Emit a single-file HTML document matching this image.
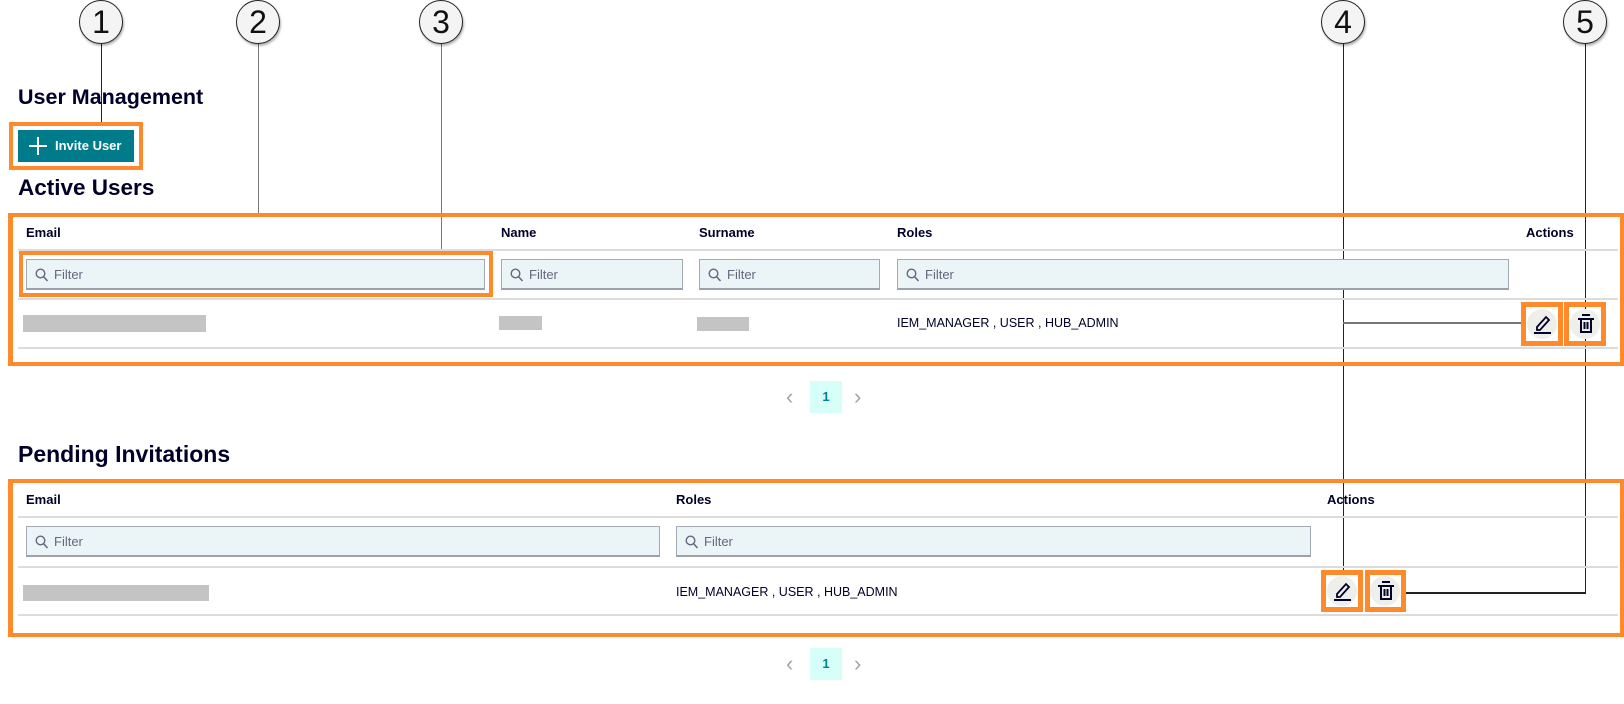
<!DOCTYPE html>
<html><head><meta charset="utf-8"><style>
*{margin:0;padding:0;box-sizing:border-box}
body{width:1624px;height:704px;background:#fff;position:relative;overflow:hidden;font-family:"Liberation Sans",sans-serif;color:#000028}
.a{position:absolute}
.ob{position:absolute;border:4px solid #ff8a2b}
.h{position:absolute;font-size:13px;font-weight:bold;color:#000028}
.ln{position:absolute;background:#dcdcdc;height:2px}
.f{position:absolute;background:#ebf5f7;border:1px solid #a3aab4;border-bottom:2px solid #9ba2ad;height:31px;font-size:13px;color:#66667e;padding-left:27px;line-height:29px}
.f svg{position:absolute;left:8px;top:8px}
.g{position:absolute;background:#c4c4c4}
.c{position:absolute;width:44px;height:44px;border:1.5px solid #222;border-radius:50%;background:#f4f4f4;font-size:32px;text-align:center;line-height:42px;color:#111;box-shadow:1px 2px 2px rgba(0,0,0,.3)}
.vl{position:absolute;width:1.2px;background:#222}
.bt{position:absolute;width:30px;height:30px;border-radius:50%;background:#eeeeea}
.pg{position:absolute;width:32px;height:32px;background:#d6fff9;color:#00838f;font-size:13px;font-weight:bold;text-align:center;line-height:32px}
.ch{position:absolute;color:#a0a4ab;font-size:22px;line-height:22px}
</style></head><body>

<div class="vl" style="left:101px;top:44px;height:82px"></div>
<div class="vl" style="left:258px;top:44px;height:170px;background:#777"></div>
<div class="vl" style="left:441px;top:44px;height:207px;background:#777"></div>
<div class="vl" style="left:1343px;top:44px;height:527px"></div>
<div class="vl" style="left:1585px;top:44px;height:550px"></div>
<div class="a" style="left:1343px;top:322px;width:178px;height:2px;background:#777"></div>
<div class="a" style="left:1406px;top:592px;width:180px;height:1.5px;background:#222"></div>

<div class="c" style="left:79px;top:0">1</div>
<div class="c" style="left:236px;top:0">2</div>
<div class="c" style="left:419px;top:0">3</div>
<div class="c" style="left:1321px;top:0">4</div>
<div class="c" style="left:1563px;top:0">5</div>

<div class="a" style="left:18px;top:85px;font-size:21.5px;font-weight:bold">User Management</div>
<div class="ob" style="left:9px;top:122px;width:134px;height:48px"></div>
<div class="a" style="left:18px;top:130px;width:116px;height:32px;background:#007b8a;color:#fff;font-size:13px;font-weight:bold;line-height:32px;padding-left:37px">Invite User
<svg class="a" style="left:11px;top:7px" width="18" height="18"><path d="M9 0v18M0 9h18" stroke="#fff" stroke-width="2"/></svg></div>
<div class="a" style="left:18px;top:175px;font-size:22.5px;font-weight:bold">Active Users</div>

<div class="ob" style="left:8px;top:213px;width:1616px;height:153px;border-width:4px 4px 4px 5px"></div>
<div class="h" style="left:26px;top:225px">Email</div>
<div class="h" style="left:501px;top:225px">Name</div>
<div class="h" style="left:699px;top:225px">Surname</div>
<div class="h" style="left:897px;top:225px">Roles</div>
<div class="h" style="left:1526px;top:225px">Actions</div>
<div class="ln" style="left:18px;top:249px;width:1600px"></div>
<div class="f" style="left:26px;top:259px;width:459px"><svg width="13" height="14"><circle cx="5.5" cy="5.5" r="4.3" fill="none" stroke="#66667e" stroke-width="1.4"/><path d="M8.6 8.8L12.5 13" stroke="#66667e" stroke-width="1.5"/></svg>Filter</div>
<div class="ob" style="left:19px;top:251px;width:474px;height:46px"></div>
<div class="f" style="left:501px;top:259px;width:182px"><svg width="13" height="14"><circle cx="5.5" cy="5.5" r="4.3" fill="none" stroke="#66667e" stroke-width="1.4"/><path d="M8.6 8.8L12.5 13" stroke="#66667e" stroke-width="1.5"/></svg>Filter</div>
<div class="f" style="left:699px;top:259px;width:181px"><svg width="13" height="14"><circle cx="5.5" cy="5.5" r="4.3" fill="none" stroke="#66667e" stroke-width="1.4"/><path d="M8.6 8.8L12.5 13" stroke="#66667e" stroke-width="1.5"/></svg>Filter</div>
<div class="f" style="left:897px;top:259px;width:612px"><svg width="13" height="14"><circle cx="5.5" cy="5.5" r="4.3" fill="none" stroke="#66667e" stroke-width="1.4"/><path d="M8.6 8.8L12.5 13" stroke="#66667e" stroke-width="1.5"/></svg>Filter</div>
<div class="ln" style="left:18px;top:298px;width:1600px"></div>
<div class="g" style="left:23px;top:315px;width:183px;height:17px"></div>
<div class="g" style="left:499px;top:316px;width:43px;height:14px"></div>
<div class="g" style="left:697px;top:317px;width:52px;height:14px"></div>
<div class="a" style="left:897px;top:316px;font-size:12.5px">IEM_MANAGER , USER , HUB_ADMIN</div>
<div class="ln" style="left:18px;top:347px;width:1600px"></div>
<div class="ob" style="left:1521px;top:302px;width:42px;height:44px;border-width:5px"></div>
<div class="ob" style="left:1564px;top:302px;width:42px;height:44px;border-width:5px"></div>
<div class="bt" style="left:1527px;top:309px"></div>
<div class="bt" style="left:1570px;top:309px"></div>
<svg class="a" style="left:1533px;top:313px" width="20" height="22"><path d="M4 14L13 4l3 3-9 10H4z" fill="none" stroke="#000028" stroke-width="1.8"/><path d="M1 20h17" stroke="#000028" stroke-width="2"/></svg>
<svg class="a" style="left:1576px;top:313px" width="20" height="22"><path d="M6 2h8M2 6h16M5 6v13h10V6M8.5 9v7M11.5 9v7" fill="none" stroke="#000028" stroke-width="2"/></svg>

<div class="ch" style="left:786px;top:386px">&#8249;</div>
<div class="pg" style="left:810px;top:381px">1</div>
<div class="ch" style="left:854px;top:386px">&#8250;</div>

<div class="a" style="left:18px;top:441px;font-size:23px;font-weight:bold">Pending Invitations</div>

<div class="ob" style="left:8px;top:479px;width:1616px;height:158px;border-width:4px 4px 4px 5px"></div>
<div class="h" style="left:26px;top:492px">Email</div>
<div class="h" style="left:676px;top:492px">Roles</div>
<div class="h" style="left:1327px;top:492px">Actions</div>
<div class="ln" style="left:18px;top:516px;width:1600px"></div>
<div class="f" style="left:26px;top:526px;width:634px"><svg width="13" height="14"><circle cx="5.5" cy="5.5" r="4.3" fill="none" stroke="#66667e" stroke-width="1.4"/><path d="M8.6 8.8L12.5 13" stroke="#66667e" stroke-width="1.5"/></svg>Filter</div>
<div class="f" style="left:676px;top:526px;width:635px"><svg width="13" height="14"><circle cx="5.5" cy="5.5" r="4.3" fill="none" stroke="#66667e" stroke-width="1.4"/><path d="M8.6 8.8L12.5 13" stroke="#66667e" stroke-width="1.5"/></svg>Filter</div>
<div class="ln" style="left:18px;top:566px;width:1600px"></div>
<div class="g" style="left:23px;top:585px;width:186px;height:16px"></div>
<div class="a" style="left:676px;top:585px;font-size:12.5px">IEM_MANAGER , USER , HUB_ADMIN</div>
<div class="ln" style="left:18px;top:614px;width:1600px"></div>
<div class="ob" style="left:1321px;top:570px;width:42px;height:42px;border-width:5px"></div>
<div class="ob" style="left:1365px;top:570px;width:41px;height:42px;border-width:5px"></div>
<div class="bt" style="left:1327px;top:576px"></div>
<div class="bt" style="left:1370px;top:576px"></div>
<svg class="a" style="left:1333px;top:580px" width="20" height="22"><path d="M4 14L13 4l3 3-9 10H4z" fill="none" stroke="#000028" stroke-width="1.8"/><path d="M1 20h17" stroke="#000028" stroke-width="2"/></svg>
<svg class="a" style="left:1376px;top:580px" width="20" height="22"><path d="M6 2h8M2 6h16M5 6v13h10V6M8.5 9v7M11.5 9v7" fill="none" stroke="#000028" stroke-width="2"/></svg>

<div class="ch" style="left:786px;top:653px">&#8249;</div>
<div class="pg" style="left:810px;top:648px">1</div>
<div class="ch" style="left:854px;top:653px">&#8250;</div>
</body></html>
